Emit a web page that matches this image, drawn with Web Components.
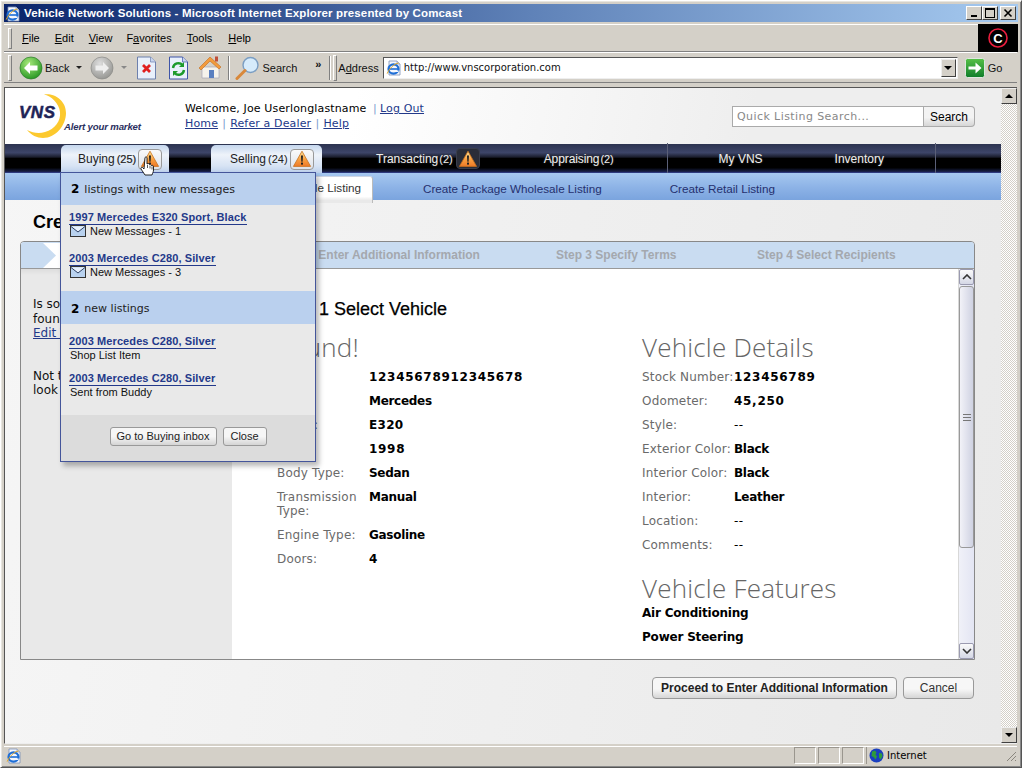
<!DOCTYPE html>
<html><head><meta charset="utf-8"><title>Vehicle Network Solutions</title>
<style>html,body{margin:0;padding:0;background:#d4d0c8;overflow:hidden}</style></head><body>
<ie-window>
  <ie-titlebar></ie-titlebar>
  <ie-menubar></ie-menubar>
  <ie-toolbar></ie-toolbar>
  <ie-viewport>
    <vns-page>
      <vns-header></vns-header>
      <vns-nav></vns-nav>
      <vns-subnav></vns-subnav>
      <vns-body></vns-body>
      <vns-popup></vns-popup>
    </vns-page>
  </ie-viewport>
  <ie-statusbar></ie-statusbar>
</ie-window>
<script>
const def=(name,html)=>customElements.define(name,class extends HTMLElement{
  constructor(){super();this.attachShadow({mode:'open'}).innerHTML=html;}
});
const IE=`<svg width="16" height="16" viewBox="0 0 16 16"><path d="M3 1h8l3 3v11H3z" fill="#f4f7fd" stroke="#7b8fb5" stroke-width=".8"/><path d="M11 1v3h3" fill="#cfdcf2" stroke="#7b8fb5" stroke-width=".6"/><ellipse cx="7.5" cy="9" rx="5" ry="4.6" fill="none" stroke="#1f6fd6" stroke-width="2.2"/><path d="M3 9h9" stroke="#1f6fd6" stroke-width="1.6"/><path d="M12.5 11.2h-4" stroke="#f4f7fd" stroke-width="1.6"/><path d="M1.2 13.6C3 9 8 3.5 12.6 3" fill="none" stroke="#e0a526" stroke-width="1"/></svg>`;
const ALERT=`<svg width="20" height="18" viewBox="0 0 20 18"><defs><linearGradient id="a" x1="0" y1="0" x2="0" y2="1"><stop offset="0" stop-color="#ffe9a0"/><stop offset=".55" stop-color="#f9a040"/><stop offset="1" stop-color="#ee7a28"/></linearGradient></defs><path d="M10 1.2 18.6 16.4H1.4z" fill="url(#a)" stroke="#c8701c" stroke-width=".8" stroke-linejoin="round"/><path d="M9 5.5h2l-.4 6.2H9.4z" fill="#222"/><rect x="9" y="12.6" width="2" height="2" fill="#222"/></svg>`;
const ENV=`<svg width="16" height="12" viewBox="0 0 16 12" style="display:block"><rect x=".5" y=".5" width="15" height="11" fill="#b9d2ef" stroke="#333"/><path d="M1 1.5 8 7l7-5.5" fill="#e8f1fb" stroke="#2d3f63"/></svg>`;
const CHROME=`font:11px "Liberation Sans",Arial,sans-serif;color:#000;`;

def('ie-window',`<style>:host{display:flex;flex-direction:column;box-sizing:border-box;width:1022px;height:768px;padding:3px 4px 3px 3px;background:#d4d0c8;border:1px solid #fff;border-right-color:#555;border-bottom-color:#555;box-shadow:inset 1px 1px 0 #e8e6e0,inset -1px -1px 0 #888;overflow:hidden}</style><slot></slot>`);

def('ie-titlebar',`<style>:host{display:flex;align-items:center;flex:none;height:18px;margin:0 -1px 0 0;padding:0 2px 0 1px;background:linear-gradient(90deg,#0a246a,#5f82b8 52%,#a6caf0);${CHROME}}
b{color:#fff;font:bold 11.5px "Liberation Sans",Arial,sans-serif;margin-left:3px;flex:1;white-space:nowrap;letter-spacing:.14px}
.i{display:flex;margin-top:1px}
.btn{box-sizing:border-box;width:16px;height:14px;background:#d4d0c8;border:1px solid;border-color:#fff #404040 #404040 #fff;display:flex;align-items:center;justify-content:center;margin-left:0}
.x{margin-left:2px}</style><span class="i">${IE}</span><b>Vehicle Network Solutions - Microsoft Internet Explorer presented by Comcast</b>
<span class="btn"><svg width="10" height="10"><rect x="2" y="7" width="6" height="2" fill="#000"/></svg></span><span class="btn"><svg width="10" height="10"><rect x=".5" y=".5" width="9" height="9" fill="none" stroke="#000"/><rect x="0" y="0" width="10" height="2"/></svg></span><span class="btn x"><svg width="10" height="10"><path d="M1.5 1.5l7 7M8.5 1.5l-7 7" stroke="#000" stroke-width="1.6"/></svg></span>`);

def('ie-menubar',`<style>:host{display:flex;flex:none;height:28px;margin-top:2px;border-top:1px solid #fff;border-bottom:1px solid #808080;box-sizing:border-box;align-items:center;${CHROME}}
.g{width:2px;height:19px;margin:0 10px 0 4px;border:1px solid;border-color:#fff #808080 #808080 #fff}
span{white-space:nowrap}u{text-decoration:underline}
.c{margin:-1px -1px -1px auto;width:40px;height:28px;background:#000;display:flex;align-items:center;justify-content:center}
svg{display:block}</style><div class="g"></div>
<span style="margin-right:15px"><u>F</u>ile</span><span style="margin-right:15px"><u>E</u>dit</span><span style="margin-right:14px"><u>V</u>iew</span><span style="margin-right:15px">F<u>a</u>vorites</span><span style="margin-right:16px"><u>T</u>ools</span><span><u>H</u>elp</span>
<div class="c"><svg width="22" height="22" viewBox="0 0 22 22"><circle cx="11" cy="11" r="9" fill="none" stroke="#ea1d3d" stroke-width="1.6"/><text x="11" y="15.5" text-anchor="middle" font-family="Liberation Sans" font-weight="bold" font-size="13" fill="#fff">C</text></svg></div>`);

def('ie-toolbar',`<style>:host{display:flex;flex:none;height:31px;align-items:center;border-top:1px solid #fff;border-bottom:1px solid #808080;box-sizing:border-box;${CHROME};color:#111}
.g{width:2px;height:24px;margin:0 7px 0 4px;border:1px solid;border-color:#fff #808080 #808080 #fff;flex:none}
.s{width:1px;height:24px;background:#808080;border-right:1px solid #fff;flex:none}
svg{display:block;flex:none}span{white-space:nowrap}
.car{width:0;height:0;border:3px solid transparent;border-top:3px solid #222;border-bottom:0;flex:none}
.addr{box-sizing:border-box;height:22px;width:575px;background:#fff;border:1px solid;border-color:#555 #eee #eee #555;display:flex;align-items:center;margin-left:4px;flex:none}
.addr span{margin-left:2px;font:10px "DejaVu Sans",sans-serif}
.dd{margin-left:auto;width:15px;height:18px;box-sizing:border-box;background:#d4d0c8;border:1px solid;border-color:#eee #404040 #404040 #eee;display:flex;align-items:center;justify-content:center;margin-right:1px}
.dd i{width:0;height:0;border:4px solid transparent;border-top:4px solid #000;border-bottom:0}</style>
<div class="g"></div>
<svg width="24" height="24" viewBox="0 0 24 24"><defs><radialGradient id="g" cx=".4" cy=".3" r=".8"><stop offset="0" stop-color="#a7e97b"/><stop offset="1" stop-color="#1b8f1a"/></radialGradient><radialGradient id="h" cx=".4" cy=".3" r=".8"><stop offset="0" stop-color="#ddd"/><stop offset="1" stop-color="#8f8f8b"/></radialGradient></defs><circle cx="12" cy="12" r="11" fill="url(#g)" stroke="#2a7a2a" stroke-width=".7"/><path d="M5 12l6-6v3.5h7.5v5H11V18z" fill="#fff"/></svg>
<span style="margin-left:2px">Back</span><i class="car" style="margin:0 8px 0 7px"></i>
<svg width="24" height="24" viewBox="0 0 24 24"><circle cx="12" cy="12" r="11" fill="url(#h)" stroke="#8a8a86" stroke-width=".7"/><path d="M19 12l-6-6v3.5H5.500v5H13V18z" fill="#eee"/></svg>
<i class="car" style="margin:0 10px 0 7px;border-top-color:#888"></i>
<svg width="19" height="24" viewBox="0 0 19 24"><path d="M.5 1h13l5 5v17H.5z" fill="#e9f0fb" stroke="#6d80ad"/><path d="M13.500 1v5h5" fill="#c8d5ee" stroke="#6d80ad" stroke-width=".7"/><path d="M6 9l7 7M13 9l-7 7" stroke="#e02020" stroke-width="2.8"/></svg>
<svg width="19" height="24" viewBox="0 0 19 24" style="margin-left:13px"><path d="M.5 1h13l5 5v17H.5z" fill="#e9f0fb" stroke="#3f55a8"/><path d="M13.500 1v5h5" fill="#c8d5ee" stroke="#3f55a8" stroke-width=".7"/><path d="M4 12a5.500 5.500 0 0 1 9.500-3" fill="none" stroke="#1c9a2c" stroke-width="2.400"/><path d="M15 6v5h-5z" fill="#1c9a2c"/><path d="M15 14a5.500 5.500 0 0 1-9.500 3" fill="none" stroke="#1c9a2c" stroke-width="2.400"/><path d="M4 20v-5h5z" fill="#1c9a2c"/></svg>
<svg width="24" height="25" viewBox="0 0 24 25" style="margin-left:10px"><path d="M4 12v11h17V12z" fill="#f6f3ec" stroke="#a8a8b8" stroke-width=".7"/><path d="M1 13 12 2l11 10-2 2-9-8-9 9z" fill="#f39b3c" stroke="#c06c20" stroke-width=".6"/><rect x="17" y="1.500" width="3" height="5" fill="#c0503a"/><rect x="11" y="15" width="5" height="8" fill="#5a7fc0"/></svg>
<div class="s" style="margin-left:6px;margin-right:5px"></div>
<svg width="26" height="26" viewBox="0 0 26 26"><circle cx="15.500" cy="10" r="7.500" fill="#d6ebfb" stroke="#7a9dc2" stroke-width="1.400"/><path d="M10 15.500 2 23.500" stroke="#d9883a" stroke-width="3" stroke-linecap="round"/></svg>
<span style="margin-left:1px">Search</span>
<span style="font:bold 11px 'Liberation Sans';margin:-8px 0 0 18px;width:11px">»</span>
<div class="s" style="margin-left:3px"></div><div class="g" style="margin:0 1px 0 2px"></div>
<span>A<u>d</u>dress</span>
<div class="addr"><span style="margin:0 0 0 2px;display:flex">${IE}</span><span>http://www.vnscorporation.com</span><div class="dd"><i></i></div></div>
<svg width="20" height="20" viewBox="0 0 20 20" style="margin-left:7px"><defs><linearGradient id="k" x1="0" y1="0" x2="0" y2="1"><stop offset="0" stop-color="#58c148"/><stop offset="1" stop-color="#0f7d2a"/></linearGradient></defs><rect x=".5" y=".5" width="19" height="19" rx="2" fill="url(#k)" stroke="#dfe8df"/><path d="M3.500 8.500h7V4.500l6 5.500-6 5.500v-4h-7z" fill="#fff"/></svg>
<span style="margin-left:3px">Go</span>`);

def('ie-viewport',`<style>:host{display:flex;flex:none;height:657px;box-sizing:border-box;margin-top:4px;border-top:1px solid #555;border-left:1px solid #555;border-bottom:1px solid #eee}
.sb{display:flex;flex-direction:column;width:16px;flex:none;background:repeating-conic-gradient(#d4d0c8 0 25%,#fff 0 50%) 0 0/2px 2px}
.b{height:16px;box-sizing:border-box;background:#d4d0c8;border:1px solid;border-color:#eee #404040 #404040 #eee;display:flex;align-items:center;justify-content:center}
.u{border-left:4px solid transparent;border-right:4px solid transparent;border-bottom:4px solid #000}
.d{border-left:4px solid transparent;border-right:4px solid transparent;border-top:4px solid #000}
.t{flex:1}::slotted(*){flex:1}</style><slot></slot><div class="sb"><div class="b"><i class="u"></i></div><div class="t"></div><div class="b"><i class="d"></i></div></div>`);

def('ie-statusbar',`<style>:host{display:flex;flex:none;height:18px;margin-top:2px;border-top:1px solid #fff;box-sizing:border-box;align-items:center;${CHROME}}
.main{flex:1;display:flex;padding-left:2px}
.c{box-sizing:border-box;width:22px;height:17px;margin-left:2px;border:1px solid;border-color:#9a968e #fff #fff #9a968e}
.net{box-sizing:border-box;width:151px;height:17px;margin-left:2px;border-left:1px solid #9a968e;display:flex;align-items:center;font:10px "DejaVu Sans",sans-serif;padding-left:2px;gap:3px}
svg{display:block}</style>
<div class="main">${IE}</div><div class="c"></div><div class="c"></div><div class="c"></div>
<div class="net"><svg width="15" height="15" viewBox="0 0 15 15"><circle cx="7.500" cy="7.500" r="7" fill="#1a3fc0"/><path d="M3 3.500l3-1 1.500 2-1 2 1.500 2-1.500 3-2-2.500-2-1zM10 5l3 .5.500 3-2 3-1.500-2z" fill="#2f9b3c"/></svg>Internet<svg style="margin-left:auto" width="12" height="12" viewBox="0 0 12 12"><path d="M11 2 2 11M11 6l-5 5M11 10l-1 1" stroke="#8a867e"/></svg></div>`);

def('vns-page',`<style>:host{display:flex;flex-direction:column;position:relative;min-width:0;overflow:hidden;background:linear-gradient(100deg,#f6f6f6,#e9e9e9)}</style><slot></slot>`);

def('vns-header',`<style>:host{display:flex;flex:none;height:56px;box-sizing:border-box;background:linear-gradient(100deg,#fff 35%,#eee 75%);font:11px "DejaVu Sans",sans-serif;color:#000}
.logo{width:180px;flex:none;position:relative}
svg{display:block;margin:5px 0 0 13px}
.t{padding-top:13px;line-height:15px;letter-spacing:.14px;white-space:nowrap}
a{color:#23398a;text-decoration:underline}
.p{color:#7b9bd0;margin:0 3px}.n{margin:0 .5px}
.s{margin:0 26px 0 auto;padding-top:18px;display:flex;height:21px}
.q{box-sizing:border-box;width:192px;height:21px;background:#fff;border:1px solid #aaa;color:#888;padding:3px 4px;letter-spacing:.42px}
.b{box-sizing:border-box;width:51px;height:21px;background:linear-gradient(#f3f3f3 55%,#d6d6d6);border:1px solid #aaa;border-left:0;border-radius:0 4px 4px 0;font:12px "Liberation Sans",sans-serif;padding:3px 0;text-align:center}
</style>
<div class="logo"><svg width="125" height="48" viewBox="0 0 125 48"><path d="M26 1.500C37 0 48 8 48 20S38 45 25 45c-6 0-12-3-16-8 6 3 12 4 18 2 10-3 16-11 15-20C41 10 33 3 26 1.500z" fill="#fcc92e"/><text x="1" y="25" font-family="Liberation Sans" font-weight="bold" font-style="italic" font-size="17" fill="#1e2356" stroke="#1e2356" stroke-width=".5" textLength="36">VNS</text><text x="46" y="37" font-family="Liberation Sans" font-style="italic" font-weight="bold" font-size="9.600" fill="#2b3060" textLength="77">Alert your market</text></svg></div>
<div class="t"><div>Welcome, Joe Userlonglastname <span class="p">|</span><a>Log Out</a></div><div><a>Home</a><span class="p n"> | </span><a>Refer a Dealer</a><span class="p n"> | </span><a>Help</a></div></div>
<div class="s"><div class="q">Quick Listing Search...</div><div class="b">Search</div></div>`);

def('vns-nav',`<style>:host{display:flex;flex:none;height:29px;box-sizing:border-box;background:linear-gradient(#2c3350 0,#3d4568 30%,#1a1d2c 45%,#000 50%,#000 82%,#1b2350 96%,#3b4aa0);font:12px "Liberation Sans",sans-serif;color:#eee;position:relative;align-items:stretch;padding-left:56px}
.tab{box-sizing:border-box;margin-top:1px;height:28px;border-radius:5px 5px 0 0;background:linear-gradient(#c5d7ee,#eef3fa 35%,#d7e3f4 75%,#bcd0ec);color:#222;display:flex;align-items:center;font-size:12px;white-space:nowrap}
.btn{box-sizing:border-box;width:24px;height:21px;border:1px solid #999;border-radius:4px;display:flex;align-items:center;justify-content:center;background:linear-gradient(#fafafa,#dde2ea)}
.it{display:flex;align-items:center;white-space:nowrap;text-shadow:0 0 2px #444}
.dk{box-sizing:border-box;width:24px;height:21px;border-radius:4px;background:#2a2d38;border:1px solid #3a3e4c;display:flex;align-items:center;justify-content:center;margin-left:3px}
.sep{width:1px;background:#5b6078;margin-top:-1px}
small{font-size:11px}</style>
<div class="tab" style="width:108px;padding-left:17px">Buying <small style="margin-left:2px"><b style="font-weight:normal;-webkit-text-stroke:.2px #222">(25)</b></small><span class="btn" style="margin-left:2px">${ALERT}</span></div>
<div class="tab" style="width:111px;margin-left:42px;padding-left:19px">Selling <small style="margin-left:2px">(24)</small><span class="btn" style="margin-left:2px">${ALERT}</span></div>
<div class="it" style="margin-left:54px">Transacting <small style="margin-left:1px">(2)</small><span class="dk">${ALERT}</span></div>
<div class="it" style="margin-left:64px;letter-spacing:-.1px">Appraising<small style="margin-left:1px">(2)</small></div>
<div class="sep" style="margin-left:53px"></div>
<div class="it" style="margin-left:51px">My VNS</div>
<div class="it" style="margin-left:72px">Inventory</div>
<div class="sep" style="margin-left:51px"></div>`);

def('vns-subnav',`<style>:host{display:flex;flex:none;height:27px;background:linear-gradient(#a6c8f0,#8cb2e6 55%,#7aa4de);font:11.7px "Liberation Sans",sans-serif;color:#25306e;align-items:center;white-space:nowrap;overflow:visible;position:relative}
span{padding-top:4px}
.a{box-sizing:border-box;margin:3px 0 -3px 195px;height:27px;width:173px;background:linear-gradient(#fff 75%,#e9e9e9 90%);border:1px solid #cfd6e4;border-bottom:0;border-radius:3px 3px 0 0;color:#333;text-align:right;padding:4px 11px 0 0;align-self:flex-start;border-right-color:#bbb;position:relative}</style>
<div class="a">Create Wholesale Listing</div><span style="margin-left:50px">Create Package Wholesale Listing</span><span style="margin-left:68px">Create Retail Listing</span>`);

def('vns-row',`<style>:host{display:flex;font:12px "DejaVu Sans",sans-serif;line-height:14px;padding-bottom:10px}
.l{width:92px;flex:none;color:#6a6a6a;letter-spacing:.18px}.v{font-weight:bold;color:#000;white-space:nowrap;letter-spacing:-.3px}
</style><div class="l"><slot name="l"></slot></div><div class="v"><slot></slot></div>`);

def('vns-body',`<style>:host{display:block;flex:1;padding:11px 0 0 15px;box-sizing:border-box;min-height:0}
h1{margin:0;font:bold 18px/22px "Liberation Sans",sans-serif;height:30px;white-space:nowrap;color:#000;padding-left:13px}
.panel{box-sizing:border-box;width:955px;height:419px;border:1px solid #888;border-radius:4px 4px 0 0;display:flex;flex-direction:column;overflow:hidden;background:#e9e9e9}
.steps{display:grid;grid-template-columns:258px 277px 201px 1fr;height:26px;flex:none;background:#c9dcf1;border-bottom:1px solid #999;font:bold 12px "Liberation Sans",sans-serif;color:#a4a8ae;align-items:center;white-space:nowrap}
.act{height:25px;background:#fff}.act svg{display:block}
.main{display:flex;flex:1;min-height:0}
.side{width:211px;flex:none;box-sizing:border-box;padding:28px 0 0 12px;font:12px/14.500px "DejaVu Sans",sans-serif;white-space:nowrap;color:#111;background:linear-gradient(#ddd,#e9e9e9 6px)}
.side a{color:#23398a;text-decoration:underline}.side p{margin:0 0 28px}
.cont{flex:1;background:#fff;padding:28px 0 0 45px;overflow:hidden;min-width:0}
h2{margin:0;font:18px/24px "Liberation Sans",sans-serif;-webkit-text-stroke:.25px #000;color:#000;height:24px}
h3{margin:0;font:300 26px/30px "Open Sans","Lato",sans-serif;color:#666;height:30px;letter-spacing:.2px;white-space:nowrap}
.cols{display:grid;grid-template-columns:365px 1fr;margin-top:12px}
.feat{font:bold 12px/14px "DejaVu Sans",sans-serif;color:#000;margin-bottom:10px;letter-spacing:-.2px}
.sb{width:16px;flex:none;display:flex;flex-direction:column;background:linear-gradient(90deg,#f0f1f8,#e3e5f3);border-left:1px solid #d8d8d8;box-sizing:border-box}
.ar{height:16px;box-sizing:border-box;border:1px solid #9a9ab0;border-radius:2px;background:linear-gradient(#fafafa,#d5d8e6);display:flex;align-items:center;justify-content:center;flex:none}
.th{height:262px;box-sizing:border-box;border:1px solid #999;border-radius:3px;background:linear-gradient(90deg,#f2f2f8,#cfd2e2);display:flex;align-items:center;justify-content:center;margin-top:1px}
.foot{display:flex;justify-content:flex-end;gap:6px;padding:17px 1px 0 0;width:955px;box-sizing:border-box}
.fb{box-sizing:border-box;height:22px;border:1px solid #999;border-radius:4px;background:linear-gradient(#f7f7f7 55%,#d6d6d6);font:12px/20px "Liberation Sans",sans-serif;text-align:center;color:#333}
</style>
<h1>Create Wholesale Listing</h1>
<div class="panel">
 <div class="steps"><div class="act"><svg width="36" height="25"><path d="M0 0H22L35 12.500 22 25H0z" fill="#c9dcf1"/></svg></div>
  <div>Step 2 Enter Additional Information</div><div>Step 3 Specify Terms</div><div>Step 4 Select Recipients</div></div>
 <div class="main">
  <div class="side"><p>Is something wrong<br>found?<br><a>Edit Vehicle</a></p><p>Not the right vehicle?<br>look again</p></div>
  <div class="cont"><h2>Step 1 Select Vehicle</h2>
   <div class="cols"><div><h3 style="margin-top:-1px;margin-bottom:8px">Found!</h3>
     <vns-row><span slot="l">VIN:</span><span style="letter-spacing:.71px">12345678912345678</span></vns-row>
     <vns-row><span slot="l">Make:</span>Mercedes</vns-row>
     <vns-row><span slot="l">Model:</span><span style="letter-spacing:.3px">E320</span></vns-row>
     <vns-row><span slot="l">Year:</span><span style="letter-spacing:.71px">1998</span></vns-row>
     <vns-row><span slot="l">Body Type:</span>Sedan</vns-row>
     <vns-row><span slot="l">Transmission Type:</span>Manual</vns-row>
     <vns-row><span slot="l">Engine Type:</span>Gasoline</vns-row>
     <vns-row><span slot="l">Doors:</span>4</vns-row></div>
    <div><h3 style="margin-top:-1px;margin-bottom:8px">Vehicle Details</h3>
     <vns-row><span slot="l" style="white-space:nowrap">Stock Number:</span><span style="letter-spacing:.71px">123456789</span></vns-row>
     <vns-row><span slot="l">Odometer:</span><span style="letter-spacing:.71px">45,250</span></vns-row>
     <vns-row><span slot="l">Style:</span><span style="font-weight:normal;letter-spacing:.5px">--</span></vns-row>
     <vns-row><span slot="l" style="white-space:nowrap">Exterior Color:</span>Black</vns-row>
     <vns-row><span slot="l" style="white-space:nowrap">Interior Color:</span>Black</vns-row>
     <vns-row><span slot="l">Interior:</span>Leather</vns-row>
     <vns-row><span slot="l">Location:</span><span style="font-weight:normal;letter-spacing:.5px">--</span></vns-row>
     <vns-row><span slot="l">Comments:</span><span style="font-weight:normal;letter-spacing:.5px">--</span></vns-row>
     <h3 style="margin-top:11px;margin-bottom:3px">Vehicle Features</h3>
     <div class="feat">Air Conditioning</div><div class="feat">Power Steering</div></div></div>
  </div>
  <div class="sb"><div class="ar"><svg width="10" height="6"><path d="M1 5l4-4 4 4" fill="none" stroke="#333" stroke-width="1.600"/></svg></div><div class="th"><svg width="8" height="7"><path d="M0 .5h8M0 3.500h8M0 6.500h8" stroke="#777"/></svg></div><div style="flex:1"></div><div class="ar"><svg width="10" height="6"><path d="M1 1l4 4 4-4" fill="none" stroke="#333" stroke-width="1.600"/></svg></div></div>
 </div>
</div>
<div class="foot"><div class="fb" style="width:245px;font-weight:bold;color:#222">Proceed to Enter Additional Information</div><div class="fb" style="width:71px">Cancel</div></div>`);

def('vns-popup',`<style>:host{position:absolute;left:55px;top:84px;width:256px;height:290px;box-sizing:border-box;border:1px solid #44559a;background:#e9e9e9;box-shadow:3px 4px 5px rgba(0,0,0,.28);display:flex;flex-direction:column;font:11px "Liberation Sans",sans-serif;color:#111}
.h{height:32px;flex:none;background:#bad0ee;display:flex;align-items:center;padding-left:10px;font:11px "DejaVu Sans",sans-serif;color:#222}
.h b{margin-right:5px;color:#000;font-size:12px}
.l{margin:0 0 0 8px;display:inline-block;font:bold 11px/13px "Liberation Sans",sans-serif;color:#23398a;text-decoration:none;border-bottom:1px solid #23398a;padding-right:1px;white-space:nowrap;letter-spacing:.1px}
.s{margin:-1px 0 0 9px;display:flex;align-items:center;gap:4px;height:14px;font-size:11px}
.i{height:41px;box-sizing:border-box}
.f{margin-top:auto;height:46px;flex:none;background:#dcdcdc;display:flex;justify-content:center;gap:6px;padding:12px 0 0 0;box-sizing:border-box}
.b{box-sizing:border-box;height:19px;border:1px solid #999;border-radius:3px;background:linear-gradient(#f6f6f6 50%,#d4d4d4);font:11px/17px "Liberation Sans",sans-serif;text-align:center;color:#222}
.cur{position:absolute;left:79px;top:-17px}</style>
<svg class="cur" width="16" height="20" viewBox="0 0 16 20"><path d="M5 1.500c1-1 2-.5 2 .5v6l1-.5c1 0 1 .5 1.500 1 1-.5 1.500 0 2 1 1-.5 2 0 2 1.500v3c0 2-1 3-1.500 5h-7c-1-2-3-4-4-6-.5-1 .5-2 1.500-1.500l1.500 1.500z" fill="#fff" stroke="#111" stroke-width=".9"/><path d="M7.500 9v3M10 9.500v3M12 10.500v3" stroke="#111" stroke-width=".7"/></svg>
<div class="h"><b>2</b>listings with new messages</div>
<div style="height:6px;flex:none"></div>
<div class="i"><a class="l">1997 Mercedes E320 Sport, Black</a><div class="s">${ENV}New Messages - 1</div></div>
<div class="i" style="height:39px"><a class="l">2003 Mercedes C280, Silver</a><div class="s">${ENV}New Messages - 3</div></div>
<div class="h" style="height:33px;padding-top:2px;box-sizing:border-box"><b>2</b>new listings</div>
<div style="height:11px;flex:none"></div>
<div class="i" style="height:37px"><a class="l">2003 Mercedes C280, Silver</a><div class="s">Shop List Item</div></div>
<div class="i" style="height:37px"><a class="l">2003 Mercedes C280, Silver</a><div class="s">Sent from Buddy</div></div>
<div class="f"><div class="b" style="width:107px">Go to Buying inbox</div><div class="b" style="width:44px">Close</div></div>`);
</script>
</body></html>
